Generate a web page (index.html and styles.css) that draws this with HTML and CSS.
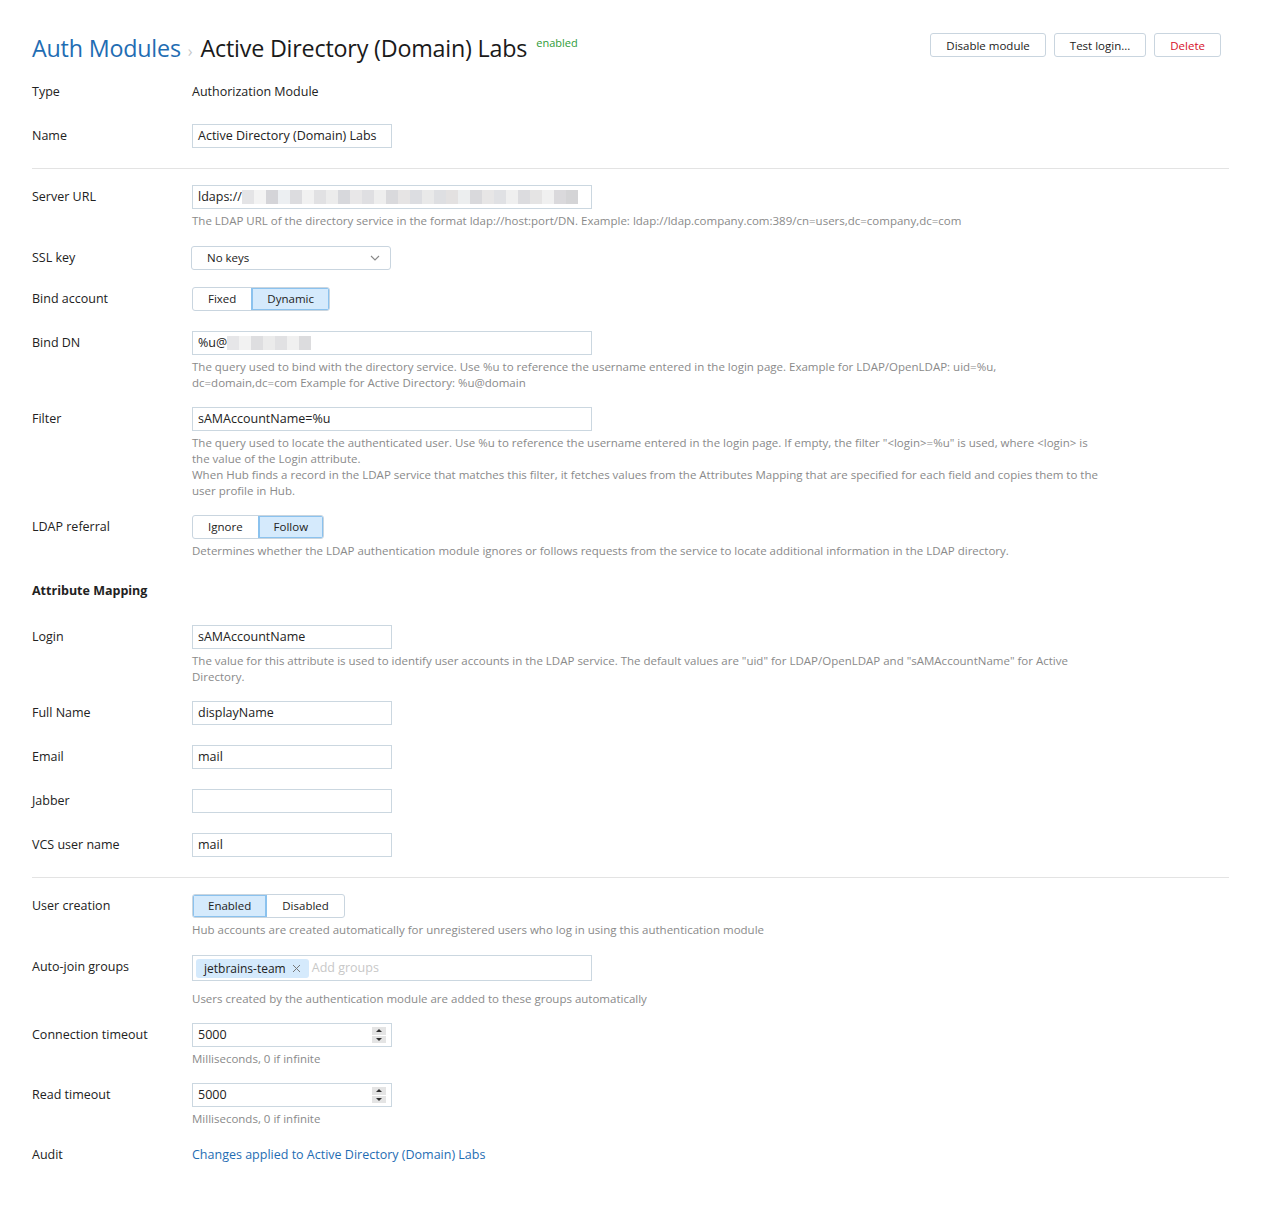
FILE: index.html
```html
<!DOCTYPE html>
<html>
<head>
<meta charset="utf-8">
<link rel="stylesheet" href="styles.css">
</head>
<body>
<div class="page">
  <div class="header">
    <h1 class="title"><a class="crumb" href="#">Auth Modules</a><span class="sep">›</span><span class="name">Active Directory (Domain) Labs</span><span class="status">enabled</span></h1>
    <div class="actions">
      <button class="btn">Disable module</button>
      <button class="btn">Test login...</button>
      <button class="btn danger">Delete</button>
    </div>
  </div>

  <div class="row"><div class="label">Type</div><div class="field"><div class="value">Authorization Module</div></div></div>
  <div class="row"><div class="label">Name</div><div class="field"><div class="input">Active Directory (Domain) Labs</div></div></div>
  <hr class="sep-line">

  <div class="row help-row gap17"><div class="label">Server URL</div><div class="field">
    <div class="input wide">ldaps://<span class="blur">
      <i style="background:#e4e4e6"></i><i style="background:#f3f3f3"></i><i style="background:#d4d4d8"></i><i style="background:#eceff2"></i><i style="background:#dcdcdf"></i><i style="background:#f1f1f1"></i><i style="background:#e1e1e3"></i><i style="background:#ececec"></i><i style="background:#d7d8dc"></i><i style="background:#e8e7e8"></i><i style="background:#dfdfe2"></i><i style="background:#eeeeee"></i><i style="background:#d9d9dc"></i><i style="background:#e6e4e4"></i><i style="background:#dcdde1"></i><i style="background:#e9e9e9"></i><i style="background:#dedfe2"></i><i style="background:#e3e1e1"></i><i style="background:#eceeef"></i><i style="background:#d9d9dc"></i><i style="background:#e7e6e6"></i><i style="background:#e0e1e4"></i><i style="background:#efefef"></i><i style="background:#dcdcdf"></i><i style="background:#e5e4e4"></i><i style="background:#f0f0f0"></i><i style="background:#dad9dc"></i><i style="background:#d4d4d6"></i>
    </span></div>
    <div class="help">The LDAP URL of the directory service in the format ldap://host:port/DN. Example: ldap://ldap.company.com:389/cn=users,dc=company,dc=com</div>
  </div></div>

  <div class="row tight"><div class="label">SSL key</div><div class="field">
    <div class="select">No keys<svg class="chev" width="10" height="6" viewBox="0 0 10 6"><path d="M1 1l4 4 4-4" fill="none" stroke="#888" stroke-width="1.1"/></svg></div>
  </div></div>

  <div class="row"><div class="label">Bind account</div><div class="field">
    <div class="seg"><span class="seg-btn">Fixed</span><span class="seg-btn active">Dynamic</span></div>
  </div></div>

  <div class="row help-row"><div class="label">Bind DN</div><div class="field">
    <div class="input wide">%u@<span class="blur">
      <i style="background:#e6e6e8"></i><i style="background:#f2f2f2"></i><i style="background:#dedee0"></i><i style="background:#ebebeb"></i><i style="background:#e1e1e3"></i><i style="background:#f0f0f0"></i><i style="background:#dcdcde"></i>
    </span></div>
    <div class="help">The query used to bind with the directory service. Use %u to reference the username entered in the login page. Example for LDAP/OpenLDAP: uid=%u, dc=domain,dc=com Example for Active Directory: %u@domain</div>
  </div></div>

  <div class="row help-row"><div class="label">Filter</div><div class="field">
    <div class="input wide">sAMAccountName=%u</div>
    <div class="help">The query used to locate the authenticated user. Use %u to reference the username entered in the login page. If empty, the filter "&lt;login&gt;=%u" is used, where &lt;login&gt; is the value of the Login attribute.<br>When Hub finds a record in the LDAP service that matches this filter, it fetches values from the Attributes Mapping that are specified for each field and copies them to the user profile in Hub.</div>
  </div></div>

  <div class="row help-row"><div class="label">LDAP referral</div><div class="field">
    <div class="seg"><span class="seg-btn">Ignore</span><span class="seg-btn active">Follow</span></div>
    <div class="help">Determines whether the LDAP authentication module ignores or follows requests from the service to locate additional information in the LDAP directory.</div>
  </div></div>

  <h2 class="section">Attribute Mapping</h2>

  <div class="row help-row"><div class="label">Login</div><div class="field">
    <div class="input">sAMAccountName</div>
    <div class="help">The value for this attribute is used to identify user accounts in the LDAP service. The default values are "uid" for LDAP/OpenLDAP and "sAMAccountName" for Active Directory.</div>
  </div></div>
  <div class="row"><div class="label">Full Name</div><div class="field"><div class="input">displayName</div></div></div>
  <div class="row"><div class="label">Email</div><div class="field"><div class="input">mail</div></div></div>
  <div class="row"><div class="label">Jabber</div><div class="field"><div class="input"></div></div></div>
  <div class="row"><div class="label">VCS user name</div><div class="field"><div class="input">mail</div></div></div>
  <hr class="sep-line">

  <div class="row help-row gap17"><div class="label">User creation</div><div class="field">
    <div class="seg"><span class="seg-btn active">Enabled</span><span class="seg-btn">Disabled</span></div>
    <div class="help">Hub accounts are created automatically for unregistered users who log in using this authentication module</div>
  </div></div>

  <div class="row help-row"><div class="label">Auto-join groups</div><div class="field">
    <div class="input wide tags"><span class="chip">jetbrains-team<svg class="x" width="9" height="9" viewBox="0 0 9 9"><path d="M1 1l7 7M8 1l-7 7" stroke="#777" stroke-width="1"/></svg></span><span class="placeholder">Add groups</span></div>
    <div class="help spaced">Users created by the authentication module are added to these groups automatically</div>
  </div></div>

  <div class="row help-row"><div class="label">Connection timeout</div><div class="field">
    <div class="input number">5000<span class="spin"><span class="half"><span class="up"></span></span><span class="half"><span class="down"></span></span></span></div>
    <div class="help">Milliseconds, 0 if infinite</div>
  </div></div>

  <div class="row help-row"><div class="label">Read timeout</div><div class="field">
    <div class="input number">5000<span class="spin"><span class="half"><span class="up"></span></span><span class="half"><span class="down"></span></span></span></div>
    <div class="help">Milliseconds, 0 if infinite</div>
  </div></div>

  <div class="row"><div class="label">Audit</div><div class="field"><a class="link value" href="#">Changes applied to Active Directory (Domain) Labs</a></div></div>
</div>
</body>
</html>
```

FILE: styles.css
```css
* { box-sizing: border-box; }
body {
  margin: 0;
  background: #fff;
  font-family: "Open Sans", "Noto Sans", sans-serif;
  font-size: 12.5px;
  color: #222;
}
.page {
  padding: 30px 32px 40px;
}
.header {
  display: flex;
  justify-content: space-between;
  align-items: flex-start;
  height: 36px;
  margin-bottom: 14px;
}
.title {
  margin: 0;
  font-size: 23.3px;
  font-weight: normal;
  line-height: 36px;
  height: 36px;
  color: #1a1a1a;
  display: flex;
  align-items: baseline;
  letter-spacing: -0.2px;
}
.crumb {
  color: #1f6db3;
  text-decoration: none;
}
.sep {
  color: #c8c8c8;
  font-size: 16px;
  margin: 0 8px 0 7px;
}
.status {
  font-size: 11px;
  color: #2e9b37;
  margin-left: 9px;
  align-self: flex-start;
  line-height: 14px;
  margin-top: 6px;
  letter-spacing: 0;
}
.actions {
  display: flex;
  gap: 8px;
  margin-top: 3px;
  margin-right: 8px;
}
.btn {
  font-family: inherit;
  font-size: 11.5px;
  height: 24px;
  padding: 0 15px;
  background: #fff;
  border: 1px solid #c9d5df;
  border-radius: 3px;
  color: #222;
}
.btn.danger { color: #d6102a; }

.row {
  display: flex;
  align-items: flex-start;
  margin-bottom: 20px;
}
.row.help-row { margin-bottom: 16px; }
.row.help-row.gap17 { margin-bottom: 17px; }
.row.tight { margin-bottom: 17px; }
.label {
  width: 160px;
  flex: none;
  line-height: 24px;
  color: #222;
}
.field { flex: 1; min-width: 0; line-height: 24px; }
.value { line-height: 24px; display: block; }
.input {
  width: 200px;
  height: 24px;
  border: 1px solid #cbd7e0;
  padding: 0 5px;
  line-height: 22px;
  display: flex;
  align-items: center;
  white-space: nowrap;
  overflow: hidden;
  color: #222;
}
.input.wide { width: 400px; }
.blur { display: flex; height: 14px; margin-left: 0; }
.blur i { display: block; width: 12px; height: 14px; }
.help {
  font-size: 11.5px;
  line-height: 16px;
  color: #8a8a8a;
  margin-top: 4px;
  max-width: 910px;
}
.help.spaced { margin-top: 10px; }

.select {
  width: 200px;
  height: 24px;
  border: 1px solid #c9d5df;
  border-radius: 3px;
  padding: 0 10px 0 15px;
  display: flex;
  align-items: center;
  justify-content: space-between;
  font-size: 11.5px;
  margin-left: -1px;
}
.seg {
  display: inline-flex;
  height: 24px;
  border: 1px solid #c9d5df;
  border-radius: 3px;
  overflow: hidden;
}
.seg-btn {
  font-size: 11.5px;
  padding: 0 15px;
  line-height: 22px;
  color: #222;
}
.seg-btn.active {
  background: #d5eafc;
  box-shadow: 0 0 0 1px #8bc2ee inset;
}
.seg-btn + .seg-btn { border-left: 1px solid #c9d5df; }
.seg-btn.active + .seg-btn, .seg-btn + .seg-btn.active { border-left-color: #8bc2ee; }

.section {
  margin: 22px 0 24px;
  font-size: 12.5px;
  font-weight: bold;
  line-height: 20px;
  color: #222;
}
.sep-line {
  border: 0;
  border-top: 1px solid #e3e3e3;
  margin: 0 0 16px;
}
.tags { height: 26px; padding: 0 3px; }
.chip {
  background: #d5eafc;
  font-size: 12px;
  padding: 0 8px 0 8px;
  height: 19px;
  line-height: 19px;
  border-radius: 3px;
  display: inline-flex;
  align-items: center;
}
.chip .x { margin-left: 6px; }
.placeholder { color: #c8c8c8; margin-left: 3px; font-size: 12.5px; }
.number { justify-content: space-between; padding-right: 5px; }
.spin {
  width: 14px;
  height: 16px;
  display: flex;
  flex-direction: column;
  gap: 1px;
  background: #fff;
}
.half {
  flex: 1;
  background: #e4e4e4;
  display: flex;
  align-items: center;
  justify-content: center;
}
.up, .down {
  width: 0; height: 0;
  border-left: 3px solid transparent;
  border-right: 3px solid transparent;
}
.up { border-bottom: 3px solid #333; }
.down { border-top: 3px solid #333; }
.link { color: #1f6db3; text-decoration: none; }
```
